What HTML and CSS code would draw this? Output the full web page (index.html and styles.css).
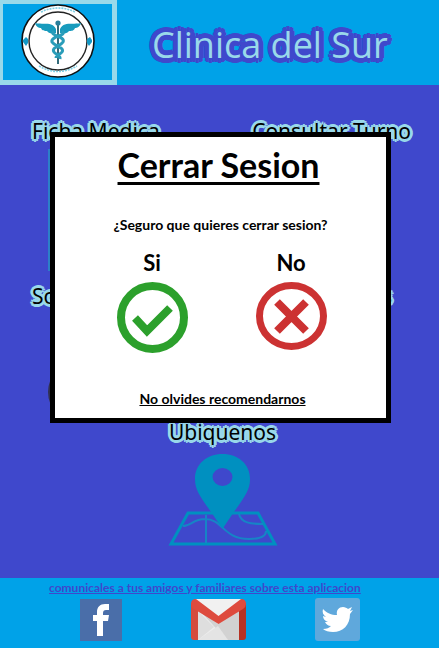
FILE: index.html
```html
<!DOCTYPE html>
<html lang="es">
<head>
<meta charset="utf-8">
<meta name="viewport" content="width=device-width, initial-scale=1">
<title>Clinica del Sur</title>
<link rel="stylesheet" href="styles.css">
</head>
<body>
<header class="header">
  <div class="logo">
    <svg width="76" height="74" viewBox="0 0 76 74" aria-hidden="true">
      <circle cx="38" cy="37" r="36" fill="#fff" stroke="#111" stroke-width="1.6"/>
      <circle cx="38" cy="37" r="29" fill="#fff" stroke="#222" stroke-width="1.4"/>
      <path d="M21 8Q38 0 55 8M19 62Q38 73 57 62" fill="none" stroke="#7fcfe4" stroke-width="1.6" stroke-dasharray="2 1"/>
      <path d="M6 33l2 2v4l-2 3-3-4v-2zM70 33l2 3v2l-3 4-2-3v-4z" fill="#1398c6"/>
      <path d="M36 25C32 17 25 21 15 19c1 4 4 5 6 5 1 3 4 3 6 3 2 3 7 3 9 2zM40 25c4-8 11-4 21-6-1 4-4 5-6 5-1 3-4 3-6 3-2 3-7 3-9 2z" fill="#189bbd"/>
      <path d="M38 20v40" stroke="#336b7a" stroke-width="2"/>
      <path d="M34 27c-6 5 12 5 9 11-3 5-12 5-9 10 2 3 7 3 6 7M42 27c6 5-12 5-10 11 3 5 13 5 10 10-2 3-6 3-6 6" fill="none" stroke="#2a9db9" stroke-width="3"/>
      <circle cx="38" cy="19" r="2.6" fill="#287f9c"/>
    </svg>
  </div>
  <h1 class="brand">Clinica del Sur</h1>
</header>

<main class="menu">
  <div class="row row-first">
    <a class="tile" href="#ficha">Ficha Medica<span class="thumb"></span></a>
    <a class="tile" href="#turno">Consultar Turno</a>
  </div>
  <div class="row row-second">
    <a class="tile" href="#so">So<span class="disc"></span></a>
    <a class="tile tile-end" href="#s">s</a>
  </div>
  <a class="tile place" href="#ubiquenos">Ubiquenos
    <svg width="112" height="92" viewBox="0 0 112 92" aria-hidden="true">
      <path d="M21 59h70l17 31H4z" fill="none" stroke="#0090c0" stroke-width="3"/>
      <path d="M16 72c8 0 10-7 22-7 18 0 18 20 44 20 10 0 17-2 17-8M39 61v28M72 60c2 9 12 10 24 10" fill="none" stroke="#1684c6" stroke-width="2"/>
      <path fill-rule="evenodd" d="M55.500 0C40 0 28 10 28 25c0 14 8 20 27.500 50C75 45 83 39 83 25 83 10 71 0 55.500 0zm0 14a10 9 0 1 1 0 18 10 9 0 1 1 0-18z" fill="#0090c0"/>
    </svg>
  </a>
</main>

<footer class="footer">
  <a class="share" href="#compartir">comunicales a tus amigos y familiares sobre esta aplicacion</a>
  <nav class="social">
    <a href="#facebook" aria-label="Facebook">
      <svg width="42" height="42" viewBox="0 0 42 42"><path fill="#4a6ea9" d="M0 0h42v42H0z"/><path fill="#fff" d="M17 37V22h-4v-6h4v-3c0-5 3-8 8-8h4v6h-3c-2 0-3 1-3 3v2h6l-1 6h-5v15z"/></svg>
    </a>
    <a href="#correo" aria-label="Gmail">
      <svg width="55" height="41" viewBox="0 0 55 41"><path fill="#ededed" d="M4 0h47v41H4z"/><path fill="#dedede" d="M7 12l16 16L7 41z"/><path fill="#d2d2d2" d="M7 10l20 15 21-15v31H36z"/><path fill="#e4e4e4" d="M7 41l20-14 10 14z"/><path fill="#d54b3d" d="M0 4h7v37H3q-3 0-3-3z"/><path fill="#b63224" d="M48 4h7v34q0 3-3 3h-4z"/><path fill="#f1f1f1" d="M5 0h45L27.500 17z"/><path fill="#de4b3e" d="M0 5Q0 0 5 0l22.500 17L50 0q5 0 5 5 0 3-3 5L27.500 25 3 10Q0 8 0 5z"/></svg>
    </a>
    <a href="#twitter" aria-label="Twitter">
      <svg width="45" height="43" viewBox="0 0 45 43"><rect width="45" height="43" rx="3" fill="#5fa8dc"/><path fill="#fff" d="M8 11c4 4 8 6 14 6-1-5 2-8 6-8 2 0 4 1 5 2l4-2-2 4 3-1-3 4c0 11-7 18-17 18-4 0-8-1-10-3 4 0 6-1 8-3-3 0-5-2-6-4h3c-3-1-5-3-5-6l3 1c-3-2-4-5-3-8z"/></svg>
    </a>
  </nav>
</footer>

<section class="dialog" role="dialog" aria-labelledby="dialog-title">
  <h2 class="dialog-title" id="dialog-title">Cerrar Sesion</h2>
  <p class="question">¿Seguro que quieres cerrar sesion?</p>
  <div class="choices">
    <button class="choice" type="button">Si
      <svg width="71" height="71" viewBox="0 0 71 71" aria-hidden="true"><circle cx="35.500" cy="35.500" r="31.500" fill="none" stroke="#2ca02c" stroke-width="8"/><path d="M18 36l12 13 23-23" fill="none" stroke="#2ca02c" stroke-width="8"/></svg>
    </button>
    <button class="choice" type="button">No
      <svg width="71" height="68" viewBox="0 0 71 68" aria-hidden="true"><ellipse cx="35.500" cy="34" rx="32" ry="30.500" fill="none" stroke="#cc3232" stroke-width="7"/><path d="M21 20l29 29M50 20L21 49" stroke="#cc3232" stroke-width="8"/></svg>
    </button>
  </div>
  <p class="reminder">No olvides recomendarnos</p>
</section>
</body>
</html>
```
FILE: styles.css
```css
* {
  box-sizing: border-box;
}

body {
  position: relative;
  display: grid;
  grid-template-rows: auto 1fr auto;
  min-height: 100vh;
  margin: 0;
  background: #3f48cc;
  color: #000;
  font-family: "Noto Sans", sans-serif;
}

h1,
h2,
p {
  margin: 0;
}

svg {
  display: block;
}

.header {
  display: flex;
  height: 85px;
  background: #00a2e8;
}

.logo {
  display: flex;
  justify-content: center;
  width: 117px;
  padding-left: 1px;
  border: 4px solid #99d9ea;
  border-width: 4px 5px 5px 3px;
}

/* Rounded outlines built from a ring of hard shadows */
.brand {
  flex: 1;
  padding-left: 35px;
  color: #99d9ea;
  font-family: "Open Sans", sans-serif;
  font-size: 36px;
  font-weight: 400;
  line-height: 90px;
  white-space: nowrap;
  text-shadow:
    5px 0 #3f48cc, -5px 0 #3f48cc, 0 5px #3f48cc, 0 -5px #3f48cc,
    4px 3px #3f48cc, -4px 3px #3f48cc, 4px -3px #3f48cc, -4px -3px #3f48cc,
    3px 4px #3f48cc, -3px 4px #3f48cc, 3px -4px #3f48cc, -3px -4px #3f48cc,
    2px 0 #3f48cc, -2px 0 #3f48cc, 0 2px #3f48cc, 0 -2px #3f48cc;
}

.menu {
  display: flex;
  flex-direction: column;
  padding-top: 32px;
}

.row {
  display: flex;
  justify-content: space-between;
  padding: 0 28px 0 32px;
}

.row-first {
  height: 165px;
}

.row-second {
  height: 136px;
}

.tile {
  color: #000;
  font-size: 21px;
  line-height: 28px;
  text-decoration: none;
  text-shadow:
    3px 0 #99d9ea, -3px 0 #99d9ea, 0 3px #99d9ea, 0 -3px #99d9ea,
    2px 2px #99d9ea, -2px 2px #99d9ea, 2px -2px #99d9ea, -2px -2px #99d9ea,
    1px 0 #99d9ea, -1px 0 #99d9ea;
}

.tile-end {
  padding-right: 19px;
}

.thumb {
  display: block;
  width: 96px;
  height: 122px;
  margin: 4px 0 0 16px;
  background: #2c80c8;
}

.disc {
  display: block;
  width: 60px;
  height: 60px;
  margin: 52px 0 0 16px;
  border-radius: 50%;
  background: #303050;
}

.place {
  display: flex;
  flex-direction: column;
  align-items: center;
  gap: 8px;
  padding-left: 6px;
}

.footer {
  height: 70px;
  background: #00a2e8;
  font-family: Lato, sans-serif;
}

.share {
  display: block;
  padding-left: 49px;
  color: #3f48cc;
  font-size: 12px;
  font-weight: 700;
  line-height: 20px;
}

.social {
  display: flex;
  align-items: center;
  justify-content: space-between;
  padding: 0 79px 0 80px;
}

.dialog {
  position: absolute;
  top: 132px;
  right: 48px;
  left: 50px;
  display: flex;
  flex-direction: column;
  align-items: center;
  height: 291px;
  padding-top: 8px;
  border: 5px solid #000;
  background: #fff;
  font-family: Lato, sans-serif;
  font-weight: 700;
}

.dialog-title {
  padding-right: 4px;
  font-size: 34px;
  line-height: 40px;
  text-decoration: underline;
  text-decoration-thickness: 3px;
  text-underline-offset: 4px;
}

.question {
  margin-top: 30px;
  font-size: 14px;
  line-height: 20px;
}

.choices {
  display: flex;
  gap: 68px;
  margin-top: 12px;
  padding-left: 2px;
}

.choice {
  display: flex;
  flex-direction: column;
  align-items: center;
  gap: 3px;
  padding: 0;
  border: 0;
  background: none;
  color: #000;
  font: inherit;
  font-size: 22px;
  line-height: 32px;
}

.reminder {
  margin-top: 36px;
  padding-left: 4px;
  font-size: 14px;
  line-height: 20px;
  text-decoration: underline;
}
```
